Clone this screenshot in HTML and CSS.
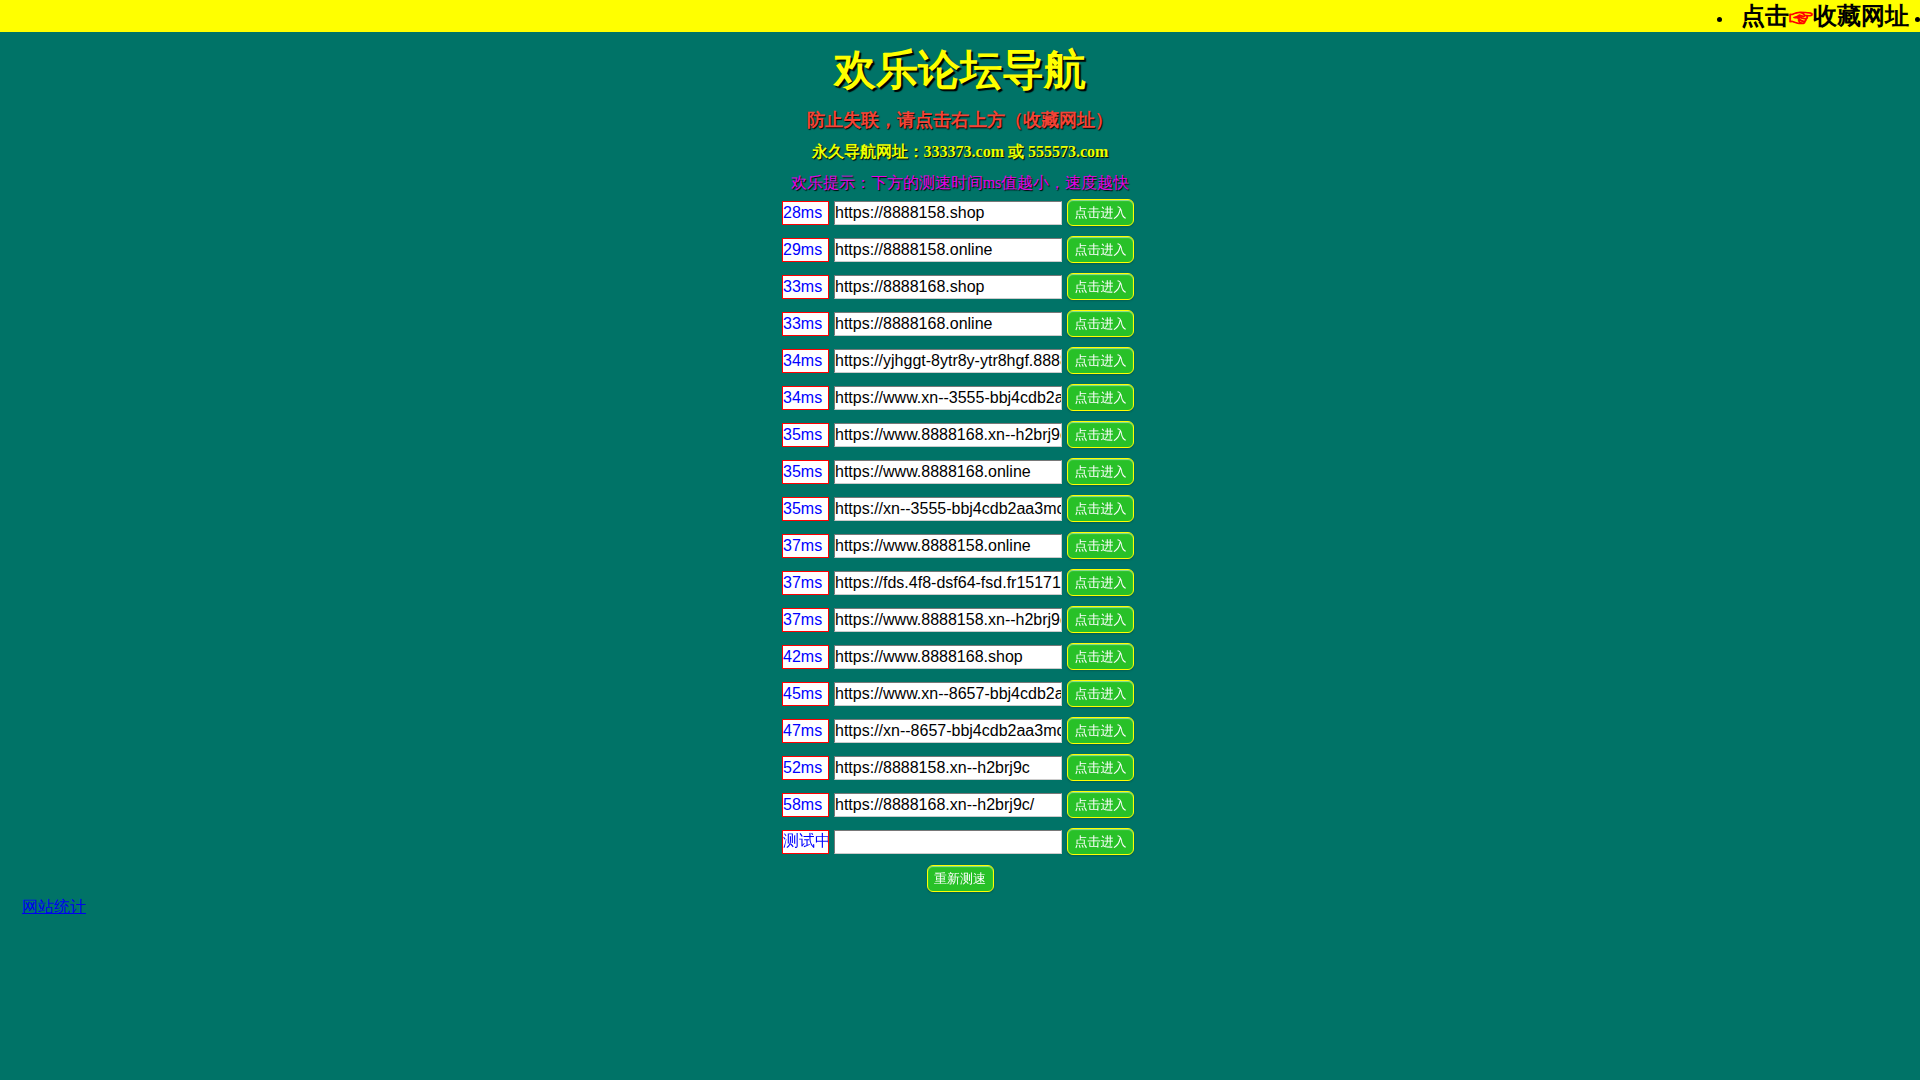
FILE: index.html
```html
<!DOCTYPE html>
<html>
<head>
<meta charset="utf-8">
<meta name="viewport" content="width=device-width, initial-scale=1">
<title>欢乐论坛导航</title>
<link rel="stylesheet" href="styles.css">
</head>
<body>
<nav class="topbar">
  <ul class="topbar-list">
    <li class="topbar-item">点击<span class="hand">☞</span>收藏网址</li>
    <li class="topbar-item"></li>
  </ul>
</nav>
<main class="content">
  <h1 class="title">欢乐论坛导航</h1>
  <p class="notice">防止失联，请点击右上方（收藏网址）</p>
  <p class="permanent">永久导航网址：333373.com 或 555573.com</p>
  <p class="hint">欢乐提示：下方的测速时间ms值越小，速度越快</p>
  <form class="sites" id="sites"></form>
</main>
<footer class="footer"><a class="stats" href="#">网站统计</a></footer>
<script src="sites.js"></script>
</body>
</html>
```
FILE: styles.css
```css
* {
  box-sizing: border-box;
}

body {
  margin: 0;
  background: #007367;
  font-family: "Liberation Serif", serif;
  font-size: 16px;
}

.topbar {
  height: 32px;
  background: #ff0;
  overflow: hidden;
}

.topbar-list {
  display: flex;
  justify-content: flex-end;
  gap: 6px;
  margin: 0;
  padding: 0;
  list-style: none;
}

.topbar-item {
  display: flex;
  align-items: center;
  height: 32px;
  font-size: 24px;
  font-weight: bold;
  line-height: 32px;
  white-space: nowrap;
}

.topbar-item::before {
  content: "";
  width: 5px;
  height: 5px;
  margin: 6px 19px 0 0;
  border-radius: 50%;
  background: #000;
}

.topbar-item:last-child::before {
  margin-right: 0;
}

.hand {
  color: #f00;
  font-family: "Noto Sans CJK SC", sans-serif;
  -webkit-text-stroke: 1px #f00;
}

.content {
  display: flex;
  flex-direction: column;
  align-items: center;
  text-align: center;
}

.title,
.notice,
.permanent,
.hint {
  margin: 0;
  text-shadow: 1px 1px 1px #000;
}

.title {
  padding: 11px 0 9px;
  color: #ff0;
  font-size: 42px;
  line-height: 54px;
  text-shadow: 2px 2px 1px #000;
}

.notice {
  color: #f44336;
  font-size: 18px;
  font-weight: bold;
  line-height: 28px;
}

.permanent {
  padding-top: 2px;
  color: #ebff00;
  font-weight: bold;
  line-height: 32px;
}

.hint {
  padding-bottom: 2px;
  color: #e600e6;
  line-height: 29px;
}

.sites {
  display: flex;
  flex-direction: column;
  align-items: center;
  gap: 10px;
}

.row {
  display: flex;
  align-items: center;
  gap: 5px;
  padding-right: 4px;
}

.time,
.url {
  height: 24px;
  padding: 1px 0;
  background: #fff;
  font-family: "Liberation Sans", "WenQuanYi Zen Hei", "Noto Sans CJK SC", sans-serif;
  font-size: 16px;
}

.time {
  width: 47px;
  border: 1px solid #f00;
  color: #00f;
}

.url {
  width: 228px;
  border: 1px inset #ccc;
  color: #000;
}

.button {
  width: 67px;
  height: 27px;
  padding: 0;
  border: 1px solid #ff0;
  border-radius: 6px;
  background: #28c128;
  box-shadow: inset 0 1px 1px rgba(255, 255, 255, 0.5), 0 1px 2px rgba(0, 0, 0, 0.2);
  color: #fff;
  font-family: "Liberation Sans", "WenQuanYi Zen Hei", "Noto Sans CJK SC", sans-serif;
  font-size: 13px;
}

.footer {
  padding: 5px 22px;
}

.stats {
  color: #00e;
}
```
FILE: sites.js
```js
const sites = [
  ["28ms", "https://8888158.shop"],
  ["29ms", "https://8888158.online"],
  ["33ms", "https://8888168.shop"],
  ["33ms", "https://8888168.online"],
  ["34ms", "https://yjhggt-8ytr8y-ytr8hgf.8888168.shop"],
  ["34ms", "https://www.xn--3555-bbj4cdb2aa3mc"],
  ["35ms", "https://www.8888168.xn--h2brj9c"],
  ["35ms", "https://www.8888168.online"],
  ["35ms", "https://xn--3555-bbj4cdb2aa3mc"],
  ["37ms", "https://www.8888158.online"],
  ["37ms", "https://fds.4f8-dsf64-fsd.fr15171.com"],
  ["37ms", "https://www.8888158.xn--h2brj9c"],
  ["42ms", "https://www.8888168.shop"],
  ["45ms", "https://www.xn--8657-bbj4cdb2aa3mc"],
  ["47ms", "https://xn--8657-bbj4cdb2aa3mc"],
  ["52ms", "https://8888158.xn--h2brj9c"],
  ["58ms", "https://8888168.xn--h2brj9c/"],
  ["测试中", ""]
];

const form = document.getElementById("sites");

function makeInput(className, label, value) {
  const input = document.createElement("input");
  input.type = "text";
  input.className = className;
  input.setAttribute("aria-label", label);
  input.value = value;
  return input;
}

function makeButton(text) {
  const button = document.createElement("button");
  button.type = "button";
  button.className = "button";
  button.textContent = text;
  return button;
}

sites.forEach(([time, url]) => {
  const row = document.createElement("div");
  row.className = "row";
  row.append(makeInput("time", "测速时间", time), makeInput("url", "网址", url), makeButton("点击进入"));
  form.append(row);
});

form.append(makeButton("重新测速"));
```
